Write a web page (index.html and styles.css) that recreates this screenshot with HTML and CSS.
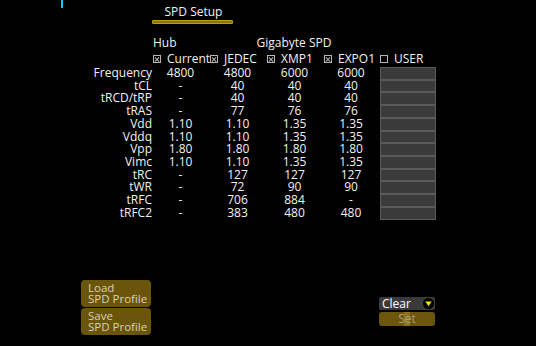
FILE: index.html
```html
<!DOCTYPE html>
<html lang="en">
<head>
    <meta charset="UTF-8">
    <title>SPD Setup</title>
    <link rel="stylesheet" href="styles.css">
</head>
<body>
    <div class="screen">
        <div class="top-mark"></div>

        <div class="tab">
            <div class="tab-title">SPD Setup</div>
            <div class="tab-line"></div>
        </div>

        <div class="spd-grid">
            <div class="group hub">Hub</div>
            <div class="group gigabyte">Gigabyte SPD</div>

            <div class="src first"><span class="cb x"></span>Current</div>
            <div class="src"><span class="cb x"></span>JEDEC</div>
            <div class="src"><span class="cb x"></span>XMP1</div>
            <div class="src"><span class="cb x"></span>EXPO1</div>
            <div class="src"><span class="cb"></span>USER</div>

            <div class="lbl">Frequency</div><div class="v">4800</div><div class="v">4800</div><div class="v">6000</div><div class="v">6000</div><div class="box"></div>
            <div class="lbl">tCL</div><div class="v">-</div><div class="v">40</div><div class="v">40</div><div class="v">40</div><div class="box"></div>
            <div class="lbl">tRCD/tRP</div><div class="v">-</div><div class="v">40</div><div class="v">40</div><div class="v">40</div><div class="box"></div>
            <div class="lbl">tRAS</div><div class="v">-</div><div class="v">77</div><div class="v">76</div><div class="v">76</div><div class="box"></div>
            <div class="lbl">Vdd</div><div class="v">1.10</div><div class="v">1.10</div><div class="v">1.35</div><div class="v">1.35</div><div class="box"></div>
            <div class="lbl">Vddq</div><div class="v">1.10</div><div class="v">1.10</div><div class="v">1.35</div><div class="v">1.35</div><div class="box"></div>
            <div class="lbl">Vpp</div><div class="v">1.80</div><div class="v">1.80</div><div class="v">1.80</div><div class="v">1.80</div><div class="box"></div>
            <div class="lbl">Vimc</div><div class="v">1.10</div><div class="v">1.10</div><div class="v">1.35</div><div class="v">1.35</div><div class="box"></div>
            <div class="lbl">tRC</div><div class="v">-</div><div class="v">127</div><div class="v">127</div><div class="v">127</div><div class="box"></div>
            <div class="lbl">tWR</div><div class="v">-</div><div class="v">72</div><div class="v">90</div><div class="v">90</div><div class="box"></div>
            <div class="lbl">tRFC</div><div class="v">-</div><div class="v">706</div><div class="v">884</div><div class="v">-</div><div class="box"></div>
            <div class="lbl">tRFC2</div><div class="v">-</div><div class="v">383</div><div class="v">480</div><div class="v">480</div><div class="box"></div>
        </div>

        <div class="bottom">
            <div class="profile-btns">
                <div class="pbtn">Load<br>SPD Profile</div>
                <div class="pbtn">Save<br>SPD Profile</div>
            </div>
            <div class="actions">
                <div class="dropdown">
                    <span>Clear</span>
                    <span class="arrow">
                        <svg width="11" height="11" viewBox="0 0 11 11">
                            <circle cx="5.5" cy="5.5" r="5.5" fill="#000"/>
                            <path d="M2.3 3.6 L8.7 3.6 L5.5 8.2 Z" fill="#f2e20a"/>
                        </svg>
                    </span>
                </div>
                <div class="set-btn">Set</div>
            </div>
        </div>
    </div>
</body>
</html>
```

FILE: styles.css
```css
body {
    margin: 0;
    background: #000;
    color: #f2f2f2;
    font-family: 'Open Sans', 'DejaVu Sans', sans-serif;
    font-size: 12px;
}

.screen {
    width: 536px;
    height: 346px;
    overflow: hidden;
    display: flex;
    flex-direction: column;
}

.top-mark {
    width: 2px;
    height: 8px;
    margin-left: 61px;
    background: #19c6e6;
}

.tab {
    margin-left: 152px;
    width: 81px;
    height: 16px;
}

.tab-title {
    text-align: center;
    line-height: 12px;
    margin-top: -2px;
    padding-left: 2px;
}

.tab-line {
    height: 2px;
    margin-top: 2px;
    background: #8a7410;
    border: 1px solid #b99c10;
    border-radius: 1px;
}

.spd-grid {
    margin-top: 11px;
    display: grid;
    grid-template-columns: 152px 57px 57px 57px 56px 57px;
    grid-template-rows: 16px 16px repeat(12, 12.73px);
    line-height: 12.73px;
}

.group {
    line-height: 16px;
}

.hub {
    grid-column: 2;
    padding-left: 1px;
}

.gigabyte {
    grid-column: 3 / 6;
    text-align: center;
}

.src {
    display: flex;
    align-items: center;
    gap: 6px;
    padding-left: 1px;
    white-space: nowrap;
    line-height: 16px;
}

.src.first {
    grid-column: 2;
}

.cb {
    width: 8px;
    height: 8px;
    border: 1px solid #b5b5b5;
    box-sizing: border-box;
    flex: none;
    position: relative;
}

.cb.x::before,
.cb.x::after {
    content: "";
    position: absolute;
    left: 0;
    top: 2.5px;
    width: 6px;
    height: 1px;
    background: #b5b5b5;
    transform: rotate(45deg);
}

.cb.x::after {
    transform: rotate(-45deg);
}

.lbl {
    grid-column: 1;
    text-align: right;
}

.v {
    text-align: center;
}

.box {
    margin: 0 0 0 1px;
    background: #3a3a3a;
    border: 1px solid #5a5a5a;
    box-sizing: border-box;
}

.bottom {
    margin-top: 60px;
    display: flex;
    align-items: flex-start;
}

.profile-btns {
    margin-left: 81px;
    display: flex;
    flex-direction: column;
    gap: 1px;
}

.pbtn {
    width: 70px;
    height: 27px;
    box-sizing: border-box;
    padding: 2px 0 0 7px;
    background: #6a550a;
    border-radius: 4px;
    color: #d9d2b4;
    font-size: 11.5px;
    line-height: 11.5px;
}

.actions {
    margin-left: 228px;
    margin-top: 17px;
    display: flex;
    flex-direction: column;
    gap: 2px;
}

.dropdown {
    width: 56px;
    height: 13px;
    background: #3a3a3a;
    border-radius: 2px;
    display: flex;
    align-items: center;
    justify-content: space-between;
    padding: 0 1px 0 3px;
    box-sizing: border-box;
    color: #fff;
    line-height: 13px;
}

.arrow {
    display: flex;
}

.set-btn {
    width: 56px;
    height: 14px;
    border-radius: 3px;
    background: linear-gradient(to right, #6b560b 0, #6b560b 25px, #8c7420 25px, #8c7420 31px, #6b560b 31px);
    color: #a99c78;
    text-align: center;
    line-height: 14px;
}
```
